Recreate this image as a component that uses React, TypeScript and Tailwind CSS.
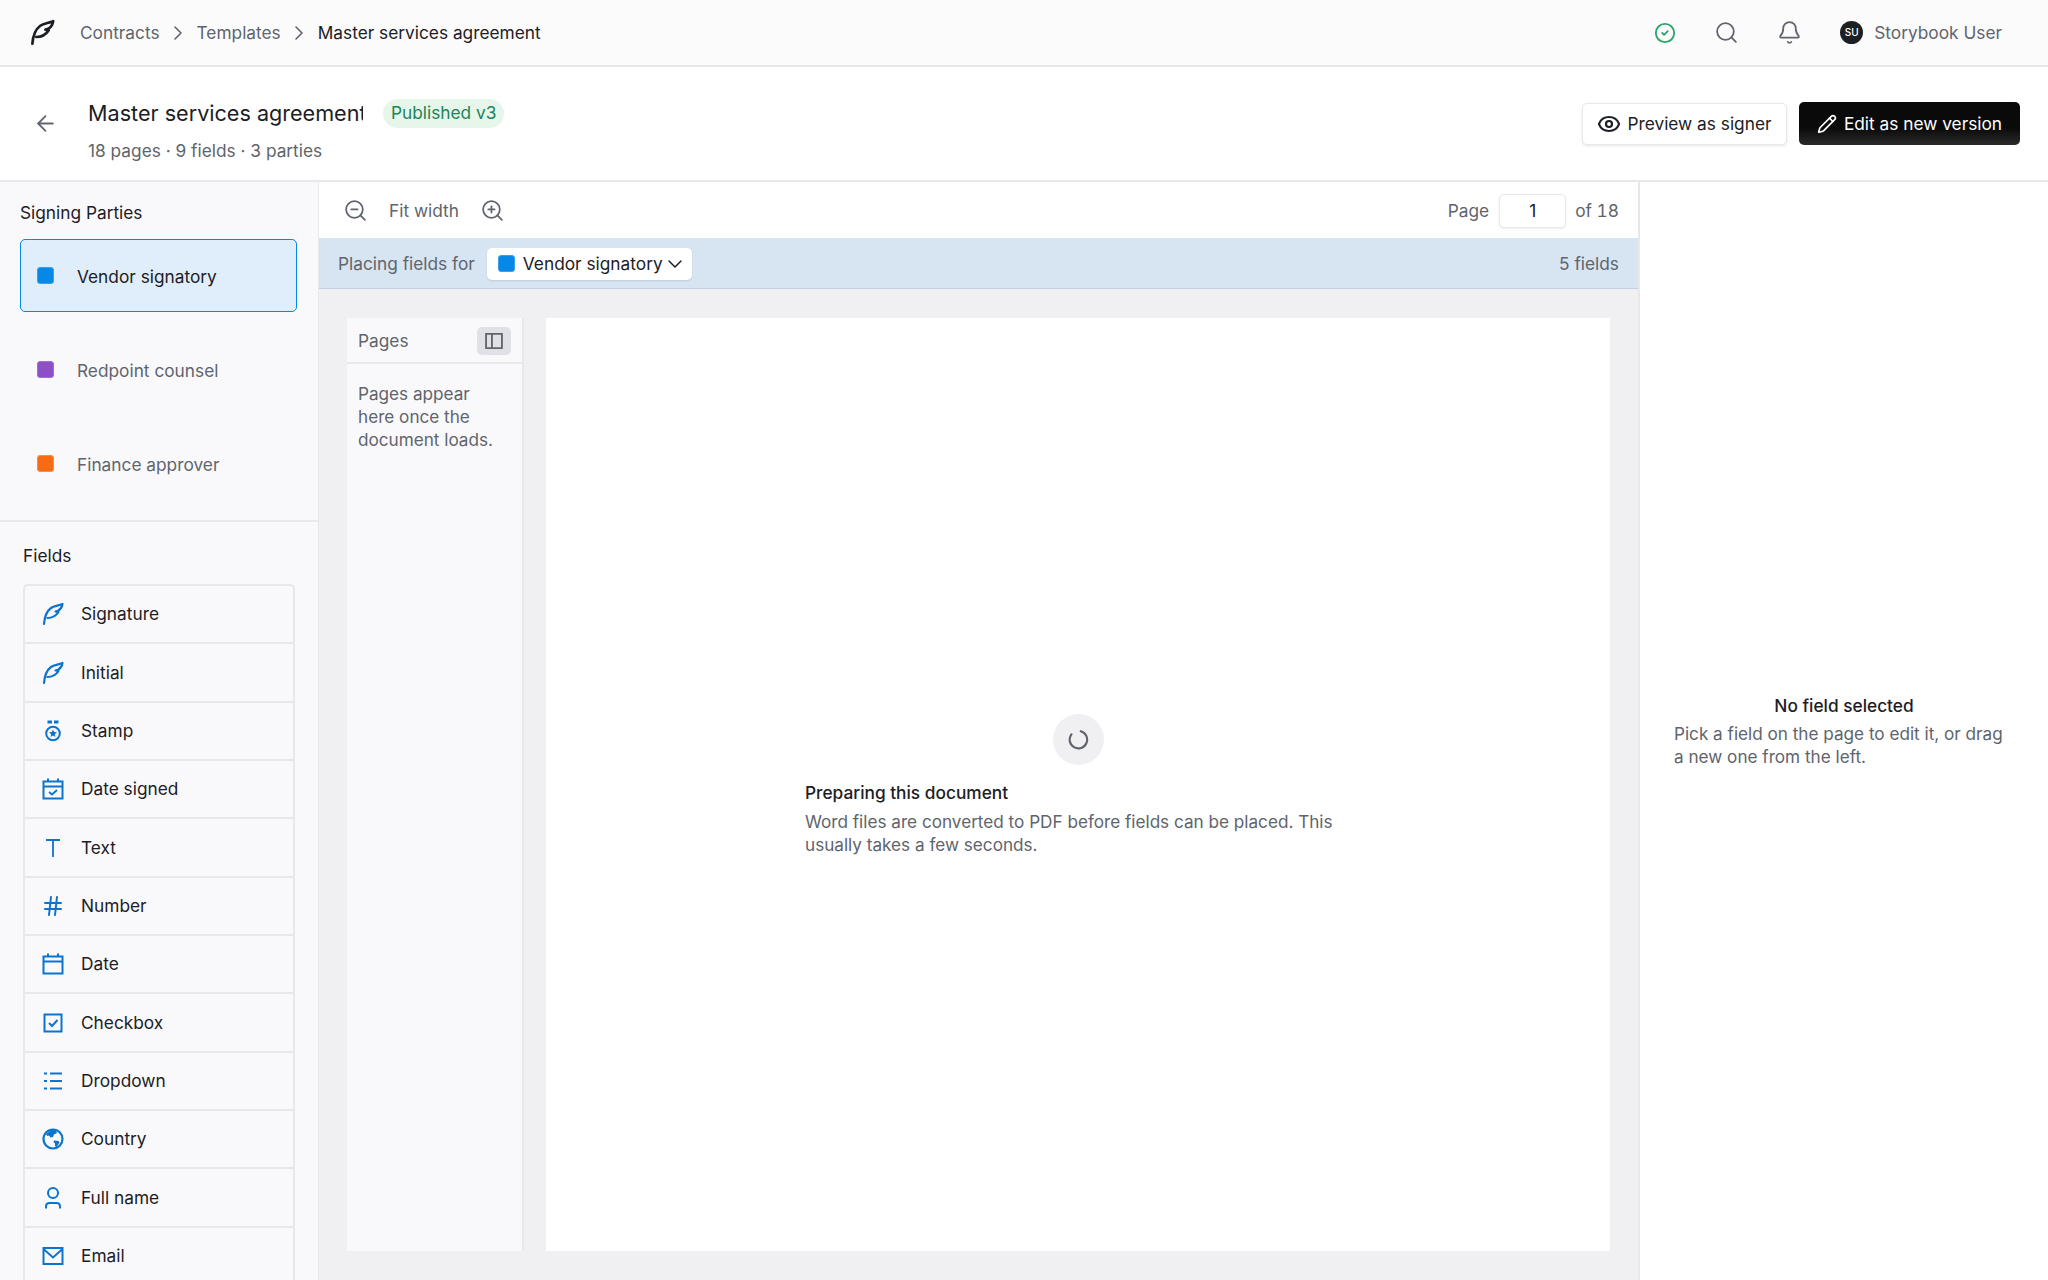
import { ArrowLeft, ChevronDown, ChevronRight, Eye, Search, Bell, ZoomIn, ZoomOut, Pencil, CircleCheck, Hash } from 'lucide-react';
import type { ReactNode } from 'react';

const parties = [
  { name: 'Vendor signatory', swatch: 'bg-[#0588e6] border-[#3aa0ea]', active: true },
  { name: 'Redpoint counsel', swatch: 'bg-[#8e4ec6] border-[#a06fd4]', active: false },
  { name: 'Finance approver', swatch: 'bg-[#f76b15] border-[#f98e4c]', active: false },
];

function Feather({ className, width = 2.2 }: { className?: string; width?: number }) {
  return (
    <svg viewBox="0 0 24 24" fill="none" stroke="currentColor" strokeWidth={width} strokeLinecap="round" strokeLinejoin="round" className={className}>
      <path d="M3 22C3.500 15 6 9 10 6C13 3.800 17 3.800 21.500 2C21 5 20 7 17.500 8.500L14.500 9.500L17.500 10C15 14 11 16 6.500 16" />
    </svg>
  );
}

function StampIcon() {
  return (
    <svg viewBox="0 0 24 24" fill="none" className="h-[24px] w-[24px] text-[#0d74ce]">
      <path d="M6.500 1.500h4.500v3H6.500zM13 1.500h4.500v3H13z" fill="currentColor" />
      <circle cx="12" cy="14.500" r="6.800" stroke="currentColor" strokeWidth="2" />
      <path d="M12 10.500l1.200 2.500 2.800.3-2.100 1.900.6 2.800-2.500-1.400-2.500 1.400.6-2.800-2.100-1.900 2.800-.3z" fill="currentColor" />
    </svg>
  );
}

function CalendarIcon({ check }: { check?: boolean }) {
  return (
    <svg viewBox="0 0 24 24" fill="none" stroke="currentColor" strokeWidth="2" className="h-[24px] w-[24px] text-[#0d74ce]">
      <path d="M2.500 4.500h19v17h-19zM2.500 9.500h19M7 1.500v4M17 1.500v4" />
      {check && <path d="M8 15l3 2.500 5-4.500" strokeWidth="1.800" />}
    </svg>
  );
}

function TextIcon() {
  return (
    <svg viewBox="0 0 24 24" fill="none" stroke="currentColor" strokeWidth="1.800" className="h-[24px] w-[24px] text-[#0d74ce]">
      <path d="M5 4h14M12 4v17" />
    </svg>
  );
}

function CheckboxIcon() {
  return (
    <svg viewBox="0 0 24 24" fill="none" stroke="currentColor" strokeWidth="2" className="h-[24px] w-[24px] text-[#0d74ce]">
      <path d="M3.500 3.500h17v17h-17zM8 12l3 3 5.500-6" />
    </svg>
  );
}

function ListIcon() {
  return (
    <svg viewBox="0 0 24 24" fill="none" stroke="currentColor" strokeWidth="2" className="h-[24px] w-[24px] text-[#0d74ce]">
      <path d="M9 4.500h12M9 12h12M9 19.500h12M3 4.500h3M3 12h3M3 19.500h3" />
    </svg>
  );
}

function GlobeIcon() {
  return (
    <svg viewBox="0 0 24 24" fill="none" className="h-[24px] w-[24px] text-[#0d74ce]">
      <circle cx="12" cy="12" r="9.500" stroke="currentColor" strokeWidth="2.200" />
      <path d="M7 5.500L10 3h5l1 3-3 1.500-1 2.500-2.500 .5-1.500-2-1.500 .5L5 7.500zM13 13.500l4.500 .5 1 1.500-3 4.500-1.500-1v-2.500l-1.500-1.500z" fill="currentColor" />
    </svg>
  );
}

function PersonIcon() {
  return (
    <svg viewBox="0 0 24 24" fill="none" stroke="currentColor" strokeWidth="2" className="h-[24px] w-[24px] text-[#0d74ce]">
      <circle cx="12" cy="7" r="5" />
      <path d="M5 22.500V20.500c0-2 1.500-3.500 3.500-3.500h7c2 0 3.500 1.500 3.500 3.500v2" />
    </svg>
  );
}

function MailIcon() {
  return (
    <svg viewBox="0 0 24 24" fill="none" stroke="currentColor" strokeWidth="2" className="h-[24px] w-[24px] text-[#0d74ce]">
      <path d="M2.500 4h19v16h-19zM2.500 5l9.500 8.500L21.500 5" />
    </svg>
  );
}

const blueFeather = <Feather className="h-[24px] w-[24px] text-[#0d74ce]" />;

const fields: { label: string; icon: ReactNode }[] = [
  { label: 'Signature', icon: blueFeather },
  { label: 'Initial', icon: blueFeather },
  { label: 'Stamp', icon: <StampIcon /> },
  { label: 'Date signed', icon: <CalendarIcon check /> },
  { label: 'Text', icon: <TextIcon /> },
  { label: 'Number', icon: <Hash className="h-[24px] w-[24px] text-[#0d74ce]" strokeWidth={2} /> },
  { label: 'Date', icon: <CalendarIcon /> },
  { label: 'Checkbox', icon: <CheckboxIcon /> },
  { label: 'Dropdown', icon: <ListIcon /> },
  { label: 'Country', icon: <GlobeIcon /> },
  { label: 'Full name', icon: <PersonIcon /> },
  { label: 'Email', icon: <MailIcon /> },
];

function TopBar() {
  return (
    <div className="flex h-[67px] shrink-0 items-center justify-between border-b-2 border-[#e8e8ec] bg-[#fbfbfc] pl-[29px] pr-[46px]">
      <div className="flex items-center">
        <Feather className="h-[27px] w-[27px] text-[#1c2024]" width={2.4} />
        <span className="ml-[24px] text-[#60646c]">Contracts</span>
        <ChevronRight className="mx-[6.500px] h-[24px] w-[24px] text-[#60646c]" strokeWidth={1.600} />
        <span className="text-[#60646c]">Templates</span>
        <ChevronRight className="mx-[6.500px] h-[24px] w-[24px] text-[#60646c]" strokeWidth={1.600} />
        <span className="text-[#1c2024]">Master services agreement</span>
      </div>
      <div className="flex items-center">
        <CircleCheck className="h-[22px] w-[22px] text-[#30a46c]" strokeWidth={2} />
        <Search className="ml-[38px] h-[25px] w-[25px] text-[#60646c]" strokeWidth={1.700} />
        <Bell className="ml-[38px] h-[25px] w-[25px] text-[#60646c]" strokeWidth={1.700} />
        <div className="ml-[38px] flex h-[23px] w-[23px] items-center justify-center rounded-full bg-[#1c2024] text-[10px] font-medium text-white">SU</div>
        <span className="ml-[11px] text-[#60646c]">Storybook User</span>
      </div>
    </div>
  );
}

function PageHeader() {
  return (
    <div className="flex h-[115px] shrink-0 items-center border-b-2 border-[#e8e8ec] bg-white pl-[33px] pr-[28px]">
      <ArrowLeft className="h-[25px] w-[25px] text-[#60646c]" strokeWidth={1.700} />
      <div className="ml-[30px] flex-1 pt-[14px]">
        <div className="flex items-center">
          <h1 className="w-[275px] overflow-hidden whitespace-nowrap text-[21.600px] leading-[30px] text-[#1c2024]">Master services agreement</h1>
          <span className="ml-[20px] flex h-[29px] items-center rounded-full bg-[#e6f6eb] px-[8px] text-[#218358]">Published v3</span>
        </div>
        <p className="mt-[11px] leading-[24px] text-[#60646c]">18 pages · 9 fields · 3 parties</p>
      </div>
      <div className="flex items-center gap-[12px]">
        <button className="flex h-[42px] w-[205px] items-center justify-center gap-[6px] rounded-[5px] border border-[#e8e8ec] bg-white text-[#1c2024] shadow-[0_1px_3px_rgba(0,0,0,0.1)]">
          <Eye className="h-[24px] w-[24px]" strokeWidth={2.200} />
          Preview as signer
        </button>
        <button className="flex h-[43px] w-[221px] items-center justify-center gap-[7px] rounded-[5px] bg-[linear-gradient(to_bottom,#0a0a0a_60%,#2a2a2c)] text-white">
          <Pencil className="h-[20px] w-[20px]" strokeWidth={2} />
          Edit as new version
        </button>
      </div>
    </div>
  );
}

function Sidebar() {
  return (
    <aside className="h-full w-[319px] shrink-0 overflow-hidden border-r-[1.500px] border-[#e8e8ec] bg-[#f9f9fb]">
      <section className="border-b-2 border-[#e8e8ec] px-[20px] pb-[20px] pt-[19px]">
        <h2 className="mb-[14px] leading-[24px] text-[#1c2024]">Signing Parties</h2>
        <div className="flex w-[277px] flex-col gap-[21px]">
          {parties.map((party) => (
            <div
              key={party.name}
              className={`flex h-[73px] items-center rounded-[5px] border-[1.500px] pl-[16px] ${
                party.active ? 'border-[#0588e6] bg-[#e0eefb] text-[#1c2024]' : 'border-transparent text-[#60646c]'
              }`}
            >
              <span className={`h-[17px] w-[17px] rounded-[3px] border ${party.swatch}`} />
              <span className="ml-[23px] mt-[2px]">{party.name}</span>
            </div>
          ))}
        </div>
      </section>
      <section className="pl-[23px] pt-[22px]">
        <h2 className="mb-[16px] leading-[24px] text-[#1c2024]">Fields</h2>
        <div className="w-[272px] rounded-t-[5px] border-x-2 border-t-2 border-[#e8e8ec]">
          {fields.map((field) => (
            <div key={field.label} className="flex h-[58.350px] items-center border-b-2 border-[#e8e8ec] pl-[16px]">
              <span className="flex w-[24px] justify-center">{field.icon}</span>
              <span className="ml-[16px] text-[#1c2024]">{field.label}</span>
            </div>
          ))}
        </div>
      </section>
    </aside>
  );
}

function Workspace() {
  return (
    <main className="flex h-full w-[1321px] shrink-0 flex-col border-r-2 border-[#e8e8ec]">
      <div className="flex h-[56px] shrink-0 items-center justify-between bg-white pl-[24px] pr-[19px] pt-[1px] text-[#60646c]">
        <div className="flex items-center">
          <ZoomOut className="h-[25px] w-[25px]" strokeWidth={1.700} />
          <span className="ml-[21px]">Fit width</span>
          <ZoomIn className="ml-[21px] h-[25px] w-[25px]" strokeWidth={1.700} />
        </div>
        <div className="flex items-center">
          <span>Page</span>
          <div className="ml-[10px] flex h-[34px] w-[67px] items-center justify-center rounded-[5px] border border-[#e8e8ec] bg-white text-[#1c2024] shadow-[0_1px_2px_rgba(0,0,0,0.08)]">1</div>
          <span className="ml-[9px] tabular-nums">of 18</span>
        </div>
      </div>
      <div className="flex h-[51px] shrink-0 items-center justify-between border-b border-[#c3d2e3] bg-[#d7e5f3] pl-[19px] pr-[19px] pt-[1px]">
        <div className="flex items-center">
          <span className="text-[#60646c]">Placing fields for</span>
          <div className="ml-[12px] flex h-[32px] w-[205px] items-center whitespace-nowrap rounded-[5px] bg-white pl-[11px] text-[#1c2024] shadow-[0_1px_2px_rgba(0,0,0,0.12)]">
            <span className="h-[17px] w-[17px] rounded-[3px] border border-[#3aa0ea] bg-[#0588e6]" />
            <span className="ml-[8px]">Vendor signatory</span>
            <ChevronDown className="h-[24px] w-[24px]" strokeWidth={1.500} />
          </div>
        </div>
        <span className="text-[#60646c]">5 fields</span>
      </div>
      <div className="flex min-h-0 flex-1 gap-[22px] bg-[#f0f0f3] pb-[29px] pl-[28px] pr-[28px] pt-[29px]">
        <div className="w-[177px] shrink-0 border-r-2 border-[#e8e8ec] bg-[#f9f9fb]">
          <div className="flex h-[46px] items-center justify-between border-b-2 border-[#e8e8ec] pl-[11px] pr-[11px] pt-[1px]">
            <span className="text-[#60646c]">Pages</span>
            <span className="flex h-[28px] w-[34px] items-center justify-center rounded-[5px] bg-[#e0e1e6]">
              <svg viewBox="0 0 24 24" fill="none" stroke="#60646c" strokeWidth="2.200" className="h-[20px] w-[20px]">
                <path d="M2.500 3.500h19v17h-19zM9.500 3.500v17" />
              </svg>
            </span>
          </div>
          <p className="pl-[11px] pr-[20px] pt-[19px] text-[17.150px] leading-[22.800px] text-[#60646c]">Pages appear here once the document loads.</p>
        </div>
        <div className="flex min-w-0 flex-1 flex-col items-center justify-center bg-white pt-[2px]">
          <div className="flex h-[51px] w-[51px] items-center justify-center rounded-full bg-[#f0f0f3]">
            <svg viewBox="0 0 24 24" fill="none" stroke="#60646c" strokeWidth="2.400" strokeLinecap="round" className="h-[21px] w-[21px]">
              <path d="M14.500 2.500A10 10 0 1 1 4 6" />
            </svg>
          </div>
          <div className="mt-[16px] w-[546px]">
            <h3 className="font-[450] leading-[24px] text-[#1c2024]">Preparing this document</h3>
            <p className="mt-[6px] text-[17.150px] leading-[22.800px] text-[#60646c]">Word files are converted to PDF before fields can be placed. This usually takes a few seconds.</p>
          </div>
        </div>
      </div>
    </main>
  );
}

function Inspector() {
  return (
    <aside className="flex h-full min-w-0 flex-1 flex-col items-center justify-center bg-white px-[34px]">
      <h3 className="font-[450] leading-[24px] text-[#1c2024]">No field selected</h3>
      <p className="mt-[5px] text-[17.150px] leading-[22.800px] text-[#60646c]">Pick a field on the page to edit it, or drag a new one from the left.</p>
    </aside>
  );
}

export default function App() {
  return (
    <div className="flex h-screen w-full flex-col overflow-hidden bg-white font-['Inter',sans-serif] text-[17.300px]">
      <TopBar />
      <PageHeader />
      <div className="flex min-h-0 flex-1">
        <Sidebar />
        <Workspace />
        <Inspector />
      </div>
    </div>
  );
}
